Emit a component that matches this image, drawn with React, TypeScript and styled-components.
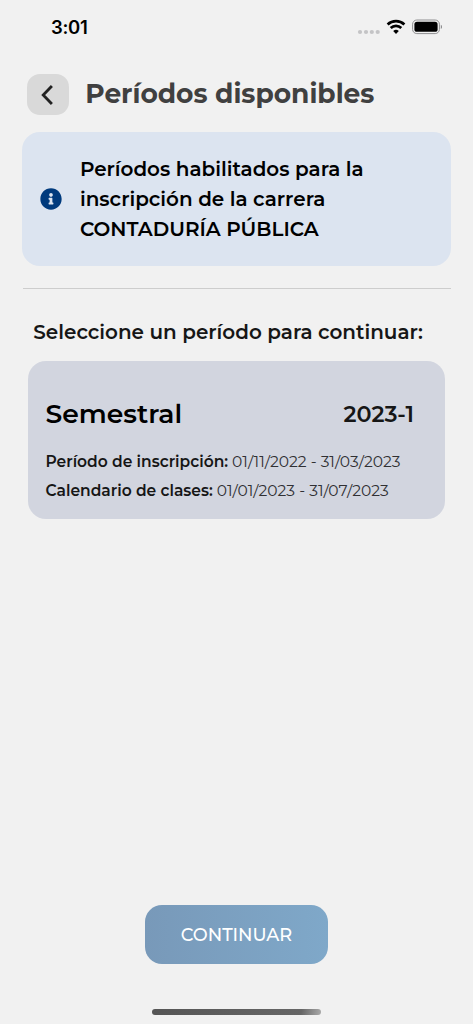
import { useState } from "react";
import styled, { createGlobalStyle } from "styled-components";
import { FaInfoCircle } from "react-icons/fa";

interface Period {
  id: string;
  name: string;
  code: string;
  enrollment: string;
  classes: string;
}

const periods: Period[] = [
  {
    id: "2023-1",
    name: "Semestral",
    code: "2023-1",
    enrollment: "01/11/2022 - 31/03/2023",
    classes: "01/01/2023 - 31/07/2023",
  },
];

const StatusIcons = () => (
  <svg width="86" height="20" viewBox="0 0 86 20" aria-hidden="true">
    <g fill="#c4c4c6">
      <circle cx="4" cy="15" r="2.1" />
      <circle cx="10" cy="15" r="2.1" />
      <circle cx="15.8" cy="15" r="2.1" />
      <circle cx="21.7" cy="15" r="2.1" />
    </g>
    <g fill="none" stroke="#000" strokeWidth="2.7">
      <path d="M31.6 7.5a12.2 12.2 0 0 1 16.8 0" />
      <path d="M34.7 11a7.6 7.6 0 0 1 10.6 0" />
    </g>
    <path d="M40 16.9l-2.8-2.8a4 4 0 0 1 5.6 0z" fill="#000" />
    <rect x="56.6" y="3" width="26.8" height="13.6" rx="4.2" fill="none" stroke="#8f8f91" />
    <rect x="58.4" y="4.8" width="23.2" height="10" rx="2.6" fill="#000" />
    <path d="M84.8 7.7c1.9.6 1.9 3.6 0 4.2z" fill="#8f8f91" />
  </svg>
);

const App = () => {
  const [selected, setSelected] = useState("");

  return (
    <Screen>
      <GlobalStyle />
      <StatusBar>
        <Clock>3:01</Clock>
        <StatusIcons />
      </StatusBar>
      <Header>
        <BackButton type="button" aria-label="Volver">
          <svg width="14" height="22" viewBox="0 0 14 22">
            <path
              d="M10.9 2L2.2 11l8.7 9"
              fill="none"
              stroke="#222"
              strokeWidth="2.8"
            />
          </svg>
        </BackButton>
        <Title>Períodos disponibles</Title>
      </Header>
      <InfoCard>
        <FaInfoCircle size={22} color="#003a7d" />
        <InfoText>
          Períodos habilitados para la
          <br />
          inscripción de la carrera
          <br />
          CONTADURÍA PÚBLICA
        </InfoText>
      </InfoCard>
      <Divider />
      <Prompt>Seleccione un período para continuar:</Prompt>
      {periods.map((period) => (
        <PeriodCard
          key={period.id}
          type="button"
          aria-pressed={selected === period.id}
          onClick={() => setSelected(period.id)}
        >
          <PeriodTop>
            <PeriodName>{period.name}</PeriodName>
            <PeriodCode>{period.code}</PeriodCode>
          </PeriodTop>
          <Detail>
            <DetailLabel>Período de inscripción:</DetailLabel>
            <DetailValue>{period.enrollment}</DetailValue>
          </Detail>
          <Detail>
            <DetailLabel>Calendario de clases:</DetailLabel>
            <DetailValue>{period.classes}</DetailValue>
          </Detail>
        </PeriodCard>
      ))}
      <Footer>
        <ContinueButton type="button">CONTINUAR</ContinueButton>
        <HomeIndicator />
      </Footer>
    </Screen>
  );
};

export default App;

const GlobalStyle = createGlobalStyle`
  body {
    margin: 0;
    background-color: #f1f1f1;
  }

  * {
    box-sizing: border-box;
  }

  button {
    border: none;
    padding: 0;
    font-family: inherit;
    cursor: pointer;
  }
`;

const Screen = styled.main`
  display: flex;
  flex-direction: column;
  height: 1024px;
  background-color: #f1f1f1;
  color: #000;
  font-family: Montserrat, Inter, sans-serif;
  white-space: nowrap;
  overflow: hidden;
`;

const StatusBar = styled.div`
  display: flex;
  justify-content: space-between;
  align-items: center;
  height: 54px;
  padding: 0 31px 0 51px;
`;

const Clock = styled.span`
  font-family: Inter, sans-serif;
  font-size: 18.5px;
  font-weight: 600;
  letter-spacing: -0.3px;
`;

const Header = styled.header`
  display: flex;
  align-items: center;
  column-gap: 16.3px;
  height: 41px;
  margin: 20px 27px 0;
`;

const BackButton = styled.button`
  display: flex;
  align-items: center;
  justify-content: center;
  width: 42px;
  height: 41px;
  border-radius: 13px;
  background-color: #d9d9d9;
`;

const Title = styled.h1`
  margin: 0;
  padding-bottom: 2px;
  color: #404040;
  font-size: 26.5px;
  font-weight: 700;
  line-height: 36px;
`;

const InfoCard = styled.section`
  display: flex;
  align-items: center;
  column-gap: 18px;
  height: 133.5px;
  margin: 17.3px 22.4px 0;
  padding: 0 17.5px;
  border-radius: 18px;
  background-color: #dce4f0;
`;

const InfoText = styled.p`
  margin: 0;
  font-size: 19.95px;
  font-weight: 600;
  line-height: 30px;
`;

const Divider = styled.hr`
  width: 428px;
  height: 1px;
  margin: 22.2px auto 0;
  border: none;
  background-color: #cdcdcd;
`;

const Prompt = styled.h2`
  margin: 28px 0 0 33.3px;
  color: #161616;
  font-size: 19.95px;
  font-weight: 600;
  line-height: 30px;
`;

const PeriodCard = styled.button`
  display: flex;
  flex-direction: column;
  height: 158px;
  margin: 14px 28px 0;
  padding: 33px 31px 0 17.5px;
  border-radius: 18px;
  background-color: #d2d5df;
  color: #161616;
  text-align: left;
`;

const PeriodTop = styled.div`
  display: flex;
  justify-content: space-between;
  align-items: center;
  width: 100%;
  height: 40px;
  margin-bottom: 13px;
`;

const PeriodName = styled.span`
  padding-bottom: 1px;
  color: #000;
  font-size: 26.6px;
  font-weight: 600;
`;

const PeriodCode = styled.span`
  font-size: 22.3px;
  font-weight: 600;
`;

const Detail = styled.div`
  display: flex;
  column-gap: 4px;
  font-size: 15.5px;
  line-height: 29px;
`;

const DetailLabel = styled.span`
  font-weight: 600;
`;

const DetailValue = styled.span`
  color: #303033;
  font-weight: 400;
`;

const Footer = styled.footer`
  display: flex;
  flex-direction: column;
  align-items: center;
  margin-top: auto;
  padding-bottom: 9.5px;
`;

const ContinueButton = styled.button`
  width: 183px;
  height: 59px;
  margin-bottom: 45px;
  border-radius: 17px;
  background: linear-gradient(90deg, #7899b9, #7fa8c9);
  color: #fff;
  font-size: 17.8px;
  font-weight: 500;
`;

const HomeIndicator = styled.div`
  width: 169px;
  height: 5.5px;
  border-radius: 3px;
  background: linear-gradient(100deg, #555 0%, #666 88%, #aaa 100%);
`;
